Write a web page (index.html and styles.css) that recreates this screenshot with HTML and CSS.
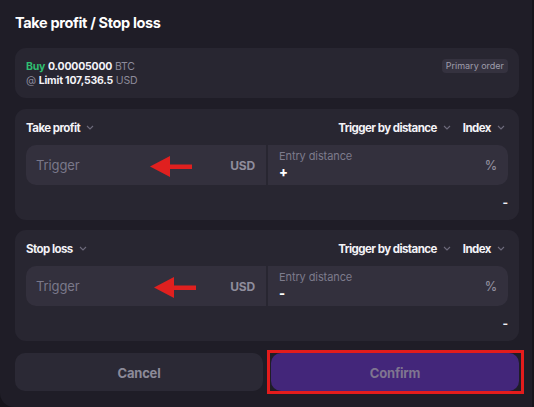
FILE: index.html
```html
<!DOCTYPE html>
<html lang="en">
<head>
<meta charset="utf-8">
<title>Take profit / Stop loss</title>
<link rel="stylesheet" href="styles.css">
</head>
<body>
<div class="modal">
  <h1 class="title">Take profit / Stop loss</h1>

  <div class="card primary">
    <div class="order">
      <div><span class="buy">Buy</span> <b>0.00005000</b> <span class="muted">BTC</span></div>
      <div><span class="muted">@</span> <b>Limit 107,536.5</b> <span class="muted">USD</span></div>
    </div>
    <span class="badge">Primary order</span>
  </div>

  <div class="card section">
    <div class="head">
      <span class="sel">Take profit <svg class="chev" viewBox="0 0 8 5"><path d="M1 1l3 3 3-3"/></svg></span>
      <span class="right">
        <span class="sel">Trigger by distance <svg class="chev" viewBox="0 0 8 5"><path d="M1 1l3 3 3-3"/></svg></span>
        <span class="sel">Index <svg class="chev" viewBox="0 0 8 5"><path d="M1 1l3 3 3-3"/></svg></span>
      </span>
    </div>
    <div class="inputs">
      <div class="field left">
        <span class="ph">Trigger</span>
        <span class="unit">USD</span>
        <svg class="arrow" viewBox="0 0 42 21"><path d="M0 10.5L20 0v8.5h22v4.5H20V21z"/></svg>
      </div>
      <div class="field rightf">
        <div class="stack">
          <span class="lbl">Entry distance</span>
          <span class="val">+</span>
        </div>
        <span class="unit pct">%</span>
      </div>
    </div>
    <div class="foot">-</div>
  </div>

  <div class="card section">
    <div class="head">
      <span class="sel">Stop loss <svg class="chev" viewBox="0 0 8 5"><path d="M1 1l3 3 3-3"/></svg></span>
      <span class="right">
        <span class="sel">Trigger by distance <svg class="chev" viewBox="0 0 8 5"><path d="M1 1l3 3 3-3"/></svg></span>
        <span class="sel">Index <svg class="chev" viewBox="0 0 8 5"><path d="M1 1l3 3 3-3"/></svg></span>
      </span>
    </div>
    <div class="inputs">
      <div class="field left">
        <span class="ph">Trigger</span>
        <span class="unit">USD</span>
        <svg class="arrow arrow2" viewBox="0 0 42 21"><path d="M0 10.5L20 0v8.5h22v4.5H20V21z"/></svg>
      </div>
      <div class="field rightf">
        <div class="stack">
          <span class="lbl">Entry distance</span>
          <span class="val">-</span>
        </div>
        <span class="unit pct">%</span>
      </div>
    </div>
    <div class="foot">-</div>
  </div>

  <div class="buttons">
    <button class="btn cancel">Cancel</button>
    <button class="btn confirm">Confirm<span class="mark"></span></button>
  </div>
</div>
</body>
</html>
```

FILE: styles.css
```css
* { box-sizing: border-box; }
html, body { margin: 0; padding: 0; }
body {
  background: #16141b;
  width: 534px;
  height: 407px;
  overflow: hidden;
  font-family: Inter, "Liberation Sans", sans-serif;
  color: #f2f1f6;
}
.modal {
  width: 532px;
  height: 407px;
  background: #1f1d27;
  border-radius: 0 0 0 14px;
  padding: 14px 15px 0 15px;
  display: flex;
  flex-direction: column;
}
.title {
  margin: 0;
  font-size: 14.5px;
  font-weight: 700;
  letter-spacing: -0.35px;
  line-height: 18px;
  height: 18px;
  color: #ffffff;
}
.card {
  background: #282631;
  border-radius: 11px;
  width: 504px;
}
.primary {
  margin-top: 16px;
  height: 50px;
  padding: 11px 11px 0 11px;
  display: flex;
  justify-content: space-between;
  align-items: flex-start;
}
.order {
  font-size: 10.5px;
  line-height: 14px;
  letter-spacing: -0.2px;
  padding-top: 1px;
}
.order b { font-weight: 700; color: #f4f3f8; }
.buy { color: #2fbf71; font-weight: 700; }
.muted { color: #8d8b9b; }
.badge {
  background: #35323f;
  color: #9e9cab;
  font-size: 9px;
  line-height: 13px;
  height: 14px;
  padding: 0 4px;
  border-radius: 4px;
}
.section {
  margin-top: 11px;
  height: 111px;
  padding: 0 11px;
}
.section + .section { margin-top: 10px; }
.head {
  height: 36px;
  display: flex;
  align-items: center;
  justify-content: space-between;
  padding-top: 1px;
  font-size: 11.5px;
  font-weight: 700;
  letter-spacing: -0.55px;
}
.right { display: flex; gap: 12px; padding-right: 3px; }
.sel { display: inline-flex; align-items: center; gap: 6px; color: #f3f2f7; }
.chev {
  width: 8px;
  height: 5px;
  fill: none;
  stroke: #6e6b7c;
  stroke-width: 1.1;
}
.inputs {
  display: flex;
  gap: 2px;
  height: 40px;
}
.field {
  position: relative;
  flex: 1;
  background: #33303d;
  display: flex;
  align-items: center;
  justify-content: space-between;
  padding: 0 11px;
}
.left { border-radius: 10px 0 0 10px; }
.rightf { border-radius: 0 10px 10px 0; }
.ph { color: #7a788a; font-size: 13px; letter-spacing: -0.1px; margin-left: -1px; }
.unit { color: #8f8d9c; font-size: 12px; font-weight: 700; letter-spacing: -0.2px; }
.pct { font-weight: 500; font-size: 12.5px; }
.stack { display: flex; flex-direction: column; line-height: 15px; margin-top: -1px; }
.lbl { color: #7d7b8c; font-size: 11px; letter-spacing: -0.1px; }
.val { color: #ffffff; font-size: 13px; font-weight: 800; line-height: 16px; }
.arrow {
  position: absolute;
  left: 124px;
  top: 11px;
  width: 42px;
  height: 21px;
  fill: #e0201f;
}
.arrow2 { left: 128px; }
.foot {
  text-align: right;
  font-size: 12px;
  font-weight: 700;
  line-height: 14px;
  padding-top: 11px;
  color: #f3f2f7;
}
.buttons {
  margin-top: 12px;
  display: flex;
  gap: 8px;
  width: 504px;
}
.btn {
  flex: 1;
  height: 38px;
  border: 0;
  border-radius: 10px;
  font-family: Inter, "Liberation Sans", sans-serif;
  font-size: 13px;
  font-weight: 700;
  letter-spacing: -0.2px;
  color: #8c8a99;
  padding: 2px 0 0 0;
}
.cancel { background: #2b2935; }
.confirm {
  position: relative;
  background: #43267a;
  color: #7f7590;
}
.mark {
  position: absolute;
  left: -4px;
  top: -3px;
  right: -5px;
  bottom: -3px;
  border: 3px solid #e31c1c;
}
```
